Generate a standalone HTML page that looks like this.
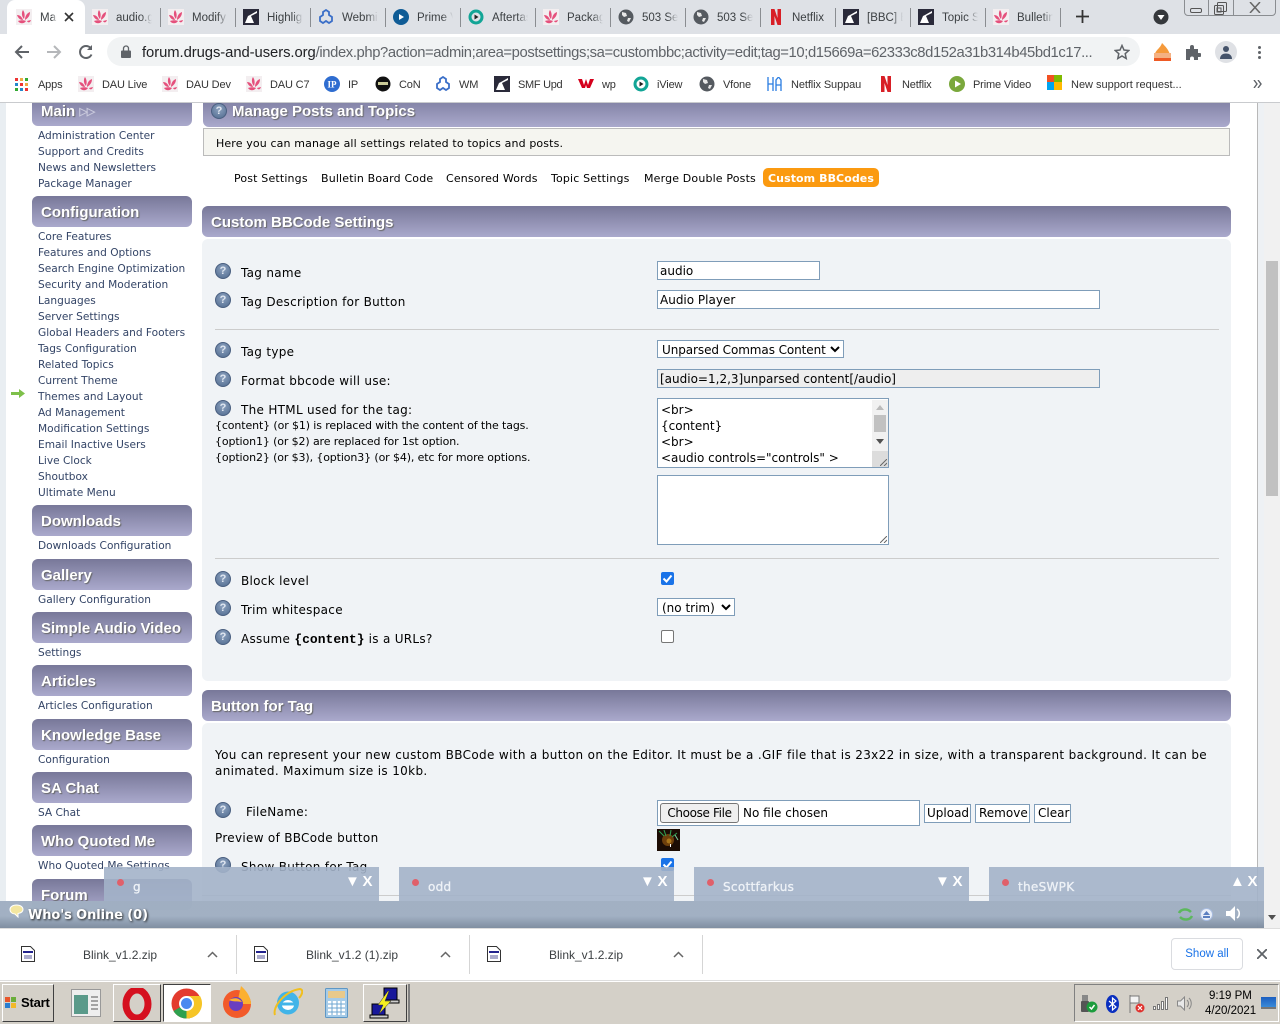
<!DOCTYPE html>
<html><head><meta charset="utf-8"><title>Manage Posts</title>
<style>
*{box-sizing:border-box}
html,body{margin:0;padding:0;width:1280px;height:1024px;overflow:hidden;background:#fff}
body{position:relative;font-family:"DejaVu Sans","Liberation Sans",sans-serif;color:#000}
.a{position:absolute}
.t{position:absolute;white-space:nowrap;line-height:16px}
.tab{position:absolute;white-space:nowrap;font:11.5px/16px "Liberation Sans",sans-serif;color:#3c4043;top:10px;overflow:hidden;-webkit-mask-image:linear-gradient(90deg,#000 70%,transparent);mask-image:linear-gradient(90deg,#000 70%,transparent)}
.sep{position:absolute;top:8px;width:1px;height:19px;background:#8a8d91}
.bm{position:absolute;top:77px;white-space:nowrap;font:11px/16px "Liberation Sans",sans-serif;color:#333;letter-spacing:-.15px}
.ic{position:absolute;display:block}
.sh{position:absolute;left:32px;width:160px;background:linear-gradient(#787899,#aaa9cc);color:#fff;font:bold 15px/34px "Liberation Sans",sans-serif;padding-left:9px;text-shadow:1px 1px 1px #666;border-radius:6px}
.si{position:absolute;left:38px;font-size:10.6px;line-height:16px;color:#334466;white-space:nowrap;margin-top:1px}
.mh{position:absolute;left:202px;width:1029px;border-radius:6px;background:linear-gradient(#787899,#aaa9cc);color:#fff;font:bold 15px/33px "Liberation Sans",sans-serif;padding-left:9px;text-shadow:1px 1px 1px #666}
.l{position:absolute;left:241px;font-size:12px;line-height:16px;white-space:nowrap;letter-spacing:.3px}
.h{position:absolute;left:215px;width:16px;height:16px;border-radius:50%;background:radial-gradient(circle at 50% 35%,#8ea3c0,#4f6a8e);border:1px solid #4a5f80;color:#dfe6f0;font:bold 11px/14px "Liberation Sans",sans-serif;text-align:center}
.f{position:absolute;background:#fff;border:1px solid #7f9db9;font-size:12px;line-height:19px;padding-left:2px;white-space:nowrap;overflow:hidden}
.hr{position:absolute;left:215px;width:1004px;height:1px;background:#ccc}
.cb{position:absolute;left:661px;width:13px;height:13px;border-radius:2px}
.off{background:#fff;border:1px solid #767676}
.chat{position:absolute;top:867px;width:275px;height:34px;background:rgba(163,179,201,.9)}
.chat b{position:absolute;left:29px;top:11px;margin-top:1px;font:normal 12px/16px "DejaVu Sans",sans-serif;color:#eef2f7;-webkit-text-stroke:.3px #eef2f7;letter-spacing:.3px}
.dot{position:absolute;left:13px;top:12px;width:7px;height:7px;border-radius:50%;background:#e0606a}
.ctl{position:absolute;left:241px;top:8px;color:#fff;font:bold 15px/14px "Liberation Sans",sans-serif;white-space:nowrap;word-spacing:-1.500px}
.dl{position:absolute;top:947px;font:12px/16px "Liberation Sans",sans-serif;color:#3c4043}
.dsep{position:absolute;top:935px;width:1px;height:39px;background:#d5d5d5}
.tb{position:absolute;top:984px;height:38px;border:1px solid;border-color:#fff #404040 #404040 #fff;background:#d4d0c8}
.s{position:absolute;font-size:11px;line-height:16px;white-space:nowrap;letter-spacing:.16px;top:171px}
.sm{position:absolute;left:215px;font-size:11px;line-height:16px;white-space:nowrap;letter-spacing:-.12px}
</style></head><body>
<svg width="0" height="0" style="position:absolute"><defs>
<symbol id="smf" viewBox="0 0 16 16"><rect width="16" height="16" fill="#f3eef0"/><path d="M7 1c2 3 2 6 1 9C6 8 5 4 7 1zM14 3c0 4-2 6-5 8 0-4 2-7 5-8zM1 6c3 0 5 2 6 5-3 0-5-2-6-5zM2 12c3-1 6-1 8 0-2 3-6 3-8 0zM11 12l4-1c-1 3-3 3-4 1z" fill="#e5507c"/></symbol>
<symbol id="hl" viewBox="0 0 16 16"><rect width="16" height="16" fill="#2a2a3a"/><path d="M2 14l3-7 2-1 7-4v2L8 7l3 7z" fill="#fff"/></symbol>
<symbol id="web" viewBox="0 0 16 16"><path d="M8 1l3 2v3l3 2v4l-3 2-3-2-3 2-3-2V8l3-2V3z" fill="none" stroke="#3b6fc8" stroke-width="1.800"/></symbol>
<symbol id="prime" viewBox="0 0 16 16"><circle cx="8" cy="8" r="8" fill="#0f5c96"/><path d="M6 5l5 3-5 3z" fill="#fff"/></symbol>
<symbol id="after" viewBox="0 0 16 16"><circle cx="8" cy="8" r="6" fill="none" stroke="#12a596" stroke-width="3"/><path d="M6.500 5.500l4 2.500-4 2.500z" fill="#222"/></symbol>
<symbol id="globe" viewBox="0 0 16 16"><circle cx="8" cy="8" r="7.500" fill="#555a60"/><path d="M4 3l4 1 1 3-3 1-2-2zM10 9l3 0-2 4-2-1z" fill="#e8e8e8"/></symbol>
<symbol id="nf" viewBox="0 0 16 16"><path d="M3 0h3.500l3 9V0H13v16H9.500l-3-9v9H3z" fill="#d81f26"/></symbol>
<symbol id="hq" viewBox="0 0 16 16"><circle cx="8" cy="8" r="8" fill="#2f6dd0"/><text x="8" y="11.500" text-anchor="middle" font-family="Liberation Serif" font-weight="bold" font-size="9" fill="#fff">IP</text></symbol>
</defs></svg>

<!-- tab strip -->
<div class="a" style="left:0;top:0;width:1280px;height:34px;background:#dee1e6"></div>
<div class="a" style="left:7px;top:0;width:78px;height:34px;background:#fff;border-radius:8px 8px 0 0"></div>
<svg class="ic" style="left:16px;top:9px" width="16" height="16"><use href="#smf"/></svg>
<div class="tab" style="left:40px;width:17px">Manage</div>
<svg class="ic" style="left:64px;top:12px" width="10" height="10" viewBox="0 0 10 10"><path d="M1 1l8 8M9 1L1 9" stroke="#333" stroke-width="1.600"/></svg>
<svg class="ic" style="left:92px;top:9px" width="16" height="16"><use href="#smf"/></svg><div class="tab" style="left:116px;width:36px">audio.gif</div><div class="sep" style="left:160px"></div>
<svg class="ic" style="left:168px;top:9px" width="16" height="16"><use href="#smf"/></svg><div class="tab" style="left:192px;width:36px">Modify</div><div class="sep" style="left:235px"></div>
<svg class="ic" style="left:243px;top:9px" width="16" height="16"><use href="#hl"/></svg><div class="tab" style="left:267px;width:36px">Highlight</div><div class="sep" style="left:310px"></div>
<svg class="ic" style="left:318px;top:9px" width="16" height="16"><use href="#web"/></svg><div class="tab" style="left:342px;width:36px">Webmin</div><div class="sep" style="left:385px"></div>
<svg class="ic" style="left:393px;top:9px" width="16" height="16"><use href="#prime"/></svg><div class="tab" style="left:417px;width:36px">Prime Video</div><div class="sep" style="left:460px"></div>
<svg class="ic" style="left:468px;top:9px" width="16" height="16"><use href="#after"/></svg><div class="tab" style="left:492px;width:36px">Aftertaste</div><div class="sep" style="left:535px"></div>
<svg class="ic" style="left:543px;top:9px" width="16" height="16"><use href="#smf"/></svg><div class="tab" style="left:567px;width:36px">Package</div><div class="sep" style="left:610px"></div>
<svg class="ic" style="left:618px;top:9px" width="16" height="16"><use href="#globe"/></svg><div class="tab" style="left:642px;width:36px">503 Service</div><div class="sep" style="left:685px"></div>
<svg class="ic" style="left:693px;top:9px" width="16" height="16"><use href="#globe"/></svg><div class="tab" style="left:717px;width:36px">503 Service</div><div class="sep" style="left:760px"></div>
<svg class="ic" style="left:768px;top:9px" width="16" height="16"><use href="#nf"/></svg><div class="tab" style="left:792px;width:34px;-webkit-mask-image:none;mask-image:none">Netflix</div><div class="sep" style="left:835px"></div>
<svg class="ic" style="left:843px;top:9px" width="16" height="16"><use href="#hl"/></svg><div class="tab" style="left:867px;width:36px">[BBC] Bulletin</div><div class="sep" style="left:910px"></div>
<svg class="ic" style="left:918px;top:9px" width="16" height="16"><use href="#hl"/></svg><div class="tab" style="left:942px;width:36px">Topic Settings</div><div class="sep" style="left:985px"></div>
<svg class="ic" style="left:993px;top:9px" width="16" height="16"><use href="#smf"/></svg><div class="tab" style="left:1017px;width:36px">Bulletin Board</div><div class="sep" style="left:1060px"></div>
<svg class="ic" style="left:1076px;top:10px" width="13" height="13" viewBox="0 0 13 13"><path d="M6.500 0v13M0 6.500h13" stroke="#333" stroke-width="1.800"/></svg>
<svg class="ic" style="left:1153px;top:9px" width="16" height="16" viewBox="0 0 16 16"><circle cx="8" cy="8" r="7.500" fill="#35383c"/><path d="M4.500 6h7L8 11z" fill="#fff"/></svg>
<!-- window controls -->
<div class="a" style="left:1184px;top:-4px;width:92px;height:20px;border:1px solid #8a8d91;border-radius:4px;background:#dee1e6"></div>
<div class="a" style="left:1208px;top:0;width:1px;height:16px;background:#8a8d91"></div>
<div class="a" style="left:1233px;top:0;width:1px;height:16px;background:#8a8d91"></div>
<div class="a" style="left:1190px;top:8px;width:12px;height:5px;border:1px solid #555;border-radius:2px"></div>
<svg class="ic" style="left:1214px;top:2px" width="13" height="13" viewBox="0 0 13 13" fill="none" stroke="#555"><rect x=".5" y="3.500" width="9" height="9" rx="1"/><rect x="3.500" y=".5" width="9" height="9" rx="1"/><rect x="3" y="6" width="4" height="4"/></svg>
<svg class="ic" style="left:1249px;top:2px" width="12" height="11" viewBox="0 0 12 11" fill="none" stroke="#666" stroke-width="1.500"><path d="M1 0l10 11M11 0L1 11"/></svg>

<!-- toolbar -->
<div class="a" style="left:0;top:34px;width:1280px;height:69px;background:#fff;border-bottom:1px solid #c9cbce"></div>
<svg class="ic" style="left:14px;top:44px" width="16" height="16" viewBox="0 0 16 16" fill="none" stroke="#5f6368" stroke-width="2"><path d="M15 8H2M8 2L2 8l6 6"/></svg>
<svg class="ic" style="left:46px;top:44px" width="16" height="16" viewBox="0 0 16 16" fill="none" stroke="#b5b7ba" stroke-width="2"><path d="M1 8h13M8 2l6 6-6 6"/></svg>
<svg class="ic" style="left:78px;top:44px" width="16" height="16" viewBox="0 0 16 16" fill="none" stroke="#5f6368" stroke-width="2"><path d="M13.500 10.500A6 6 0 1 1 12.500 4"/><path d="M14 1v5H9" fill="#5f6368" stroke="none"/></svg>
<div class="a" style="left:107px;top:37px;width:1033px;height:29px;background:#f1f3f4;border-radius:15px"></div>
<svg class="ic" style="left:121px;top:45px" width="10" height="13" viewBox="0 0 10 13"><path d="M2.500 6V3.500a2.500 2.500 0 0 1 5 0V6" fill="none" stroke="#5f6368" stroke-width="1.300"/><rect y="5.500" width="10" height="7.500" rx="1" fill="#5f6368"/></svg>
<div class="t" style="left:142px;top:45px;font:14.800px/16px 'Liberation Sans',sans-serif;color:#5f6368;letter-spacing:-.39px;width:965px;overflow:hidden"><span style="color:#202124;letter-spacing:-.06px">forum.drugs-and-users.org</span>/index.php?action=admin;area=postsettings;sa=custombbc;activity=edit;tag=10;d15669a=62333c8d152a31b314b45bd1c17...</div>
<svg class="ic" style="left:1114px;top:44px" width="16" height="16" viewBox="0 0 16 16"><path d="M8 1.500l2 4.500 4.800.5-3.600 3.200 1 4.800L8 12l-4.200 2.500 1-4.800L1.200 6.500 6 6z" fill="none" stroke="#5f6368" stroke-width="1.500"/></svg>
<svg class="ic" style="left:1154px;top:43px" width="17" height="18" viewBox="0 0 17 18"><path d="M1 12c0-5 5-6 7-12 3 3 7 7 8 12z" fill="#f59a3b"/><rect y="10" width="17" height="5" fill="#f4b183"/><rect y="15" width="17" height="3" fill="#ee5a24"/></svg>
<svg class="ic" style="left:1186px;top:45px" width="15" height="15" viewBox="0 0 15 15"><path d="M0 4h4V2a2 2 0 0 1 4 0v2h4v4h1.500a2 2 0 0 1 0 4H12v3H8v-1.500a2 2 0 0 0-4 0V15H0z" fill="#5f6368"/></svg>
<div class="a" style="left:1215px;top:41px;width:22px;height:22px;border-radius:50%;background:#dfe1e5"></div>
<svg class="ic" style="left:1219px;top:45px" width="14" height="14" viewBox="0 0 14 14"><circle cx="7" cy="4" r="3" fill="#45536a"/><path d="M1 14c0-4 3-5.500 6-5.500s6 1.500 6 5.500z" fill="#45536a"/></svg>
<div class="a" style="left:1258px;top:46px;width:3px;height:3px;border-radius:50%;background:#5f6368;box-shadow:0 5px 0 #5f6368,0 10px 0 #5f6368"></div>

<!-- bookmarks -->
<div class="a" style="left:15px;top:78px;width:3px;height:3px;background:#e33;box-shadow:5px 0 #ea4,10px 0 #3a3,0 5px #28c,5px 5px #e33,10px 5px #ea4,0 10px #3a3,5px 10px #28c,10px 10px #e33"></div>
<div class="bm" style="left:38px">Apps</div>
<svg class="ic" style="left:78px;top:76px" width="16" height="16"><use href="#smf"/></svg><div class="bm" style="left:102px">DAU Live</div>
<svg class="ic" style="left:162px;top:76px" width="16" height="16"><use href="#smf"/></svg><div class="bm" style="left:186px">DAU Dev</div>
<svg class="ic" style="left:246px;top:76px" width="16" height="16"><use href="#smf"/></svg><div class="bm" style="left:270px">DAU C7</div>
<svg class="ic" style="left:324px;top:76px" width="16" height="16"><use href="#hq"/></svg><div class="bm" style="left:348px">IP</div>
<svg class="ic" style="left:375px;top:76px" width="16" height="16" viewBox="0 0 16 16"><circle cx="8" cy="8" r="7.500" fill="#111"/><rect x="3" y="6" width="10" height="3" fill="#cc9"/></svg><div class="bm" style="left:399px">CoN</div>
<svg class="ic" style="left:435px;top:76px" width="16" height="16"><use href="#web"/></svg><div class="bm" style="left:459px">WM</div>
<svg class="ic" style="left:494px;top:76px" width="16" height="16"><use href="#hl"/></svg><div class="bm" style="left:518px;letter-spacing:-.3px">SMF Upd</div>
<svg class="ic" style="left:578px;top:79px" width="16" height="9" viewBox="0 0 16 12" preserveAspectRatio="none"><path d="M0 0h4l2 8 2-8h0l2 8 2-8h4l-4 12H9L8 8l-1 4H4z" fill="#d5001c"/></svg><div class="bm" style="left:602px">wp</div>
<svg class="ic" style="left:633px;top:76px" width="16" height="16"><use href="#after"/></svg><div class="bm" style="left:657px">iView</div>
<svg class="ic" style="left:699px;top:76px" width="16" height="16"><use href="#globe"/></svg><div class="bm" style="left:723px">Vfone</div>
<svg class="ic" style="left:767px;top:77px" width="15" height="14" viewBox="0 0 15 14" fill="none" stroke="#2a7de1" stroke-width="1.300"><path d="M1 0v14M6 0v14M1 7h5M9 14V3l2.500-3L14 3v11M9 8h5"/></svg><div class="bm" style="left:791px;letter-spacing:-.1px">Netflix Suppau</div>
<svg class="ic" style="left:878px;top:76px" width="16" height="16"><use href="#nf"/></svg><div class="bm" style="left:902px">Netflix</div>
<svg class="ic" style="left:949px;top:76px" width="16" height="16" viewBox="0 0 16 16"><circle cx="8" cy="8" r="8" fill="#7aa83c"/><path d="M6 4.500l6 3.500-6 3.500z" fill="#fff"/></svg><div class="bm" style="left:973px">Prime Video</div>
<div class="a" style="left:1047px;top:75px;width:7px;height:7px;background:#f25022"></div><div class="a" style="left:1054px;top:75px;width:8px;height:7px;background:#7fba00"></div><div class="a" style="left:1047px;top:82px;width:7px;height:8px;background:#00a4ef"></div><div class="a" style="left:1054px;top:82px;width:8px;height:8px;background:#ffb900"></div>
<div class="bm" style="left:1071px;letter-spacing:0">New support request...</div>
<svg class="ic" style="left:1253px;top:80px" width="9" height="8" viewBox="0 0 9 8" fill="none" stroke="#5f6368" stroke-width="1.400"><path d="M1 0l3 4-3 4M5 0l3 4-3 4"/></svg>

<!-- page frame -->
<div class="a" style="left:0;top:103px;width:6px;height:825px;background:#e9eef2"></div>
<div class="a" style="left:1257px;top:103px;width:1px;height:825px;background:#b8b8b8"></div>
<div class="a" style="left:1258px;top:103px;width:6px;height:825px;background:#eef1f4"></div>
<div class="a" style="left:1264px;top:103px;width:16px;height:825px;background:#f1f1f1"></div>
<div class="a" style="left:1266px;top:261px;width:12px;height:235px;background:#c1c1c1"></div>
<svg class="ic" style="left:1268px;top:915px" width="8" height="5" viewBox="0 0 8 5"><path d="M0 0h8L4 5z" fill="#505050"/></svg>

<!-- sidebar -->
<div class="sh" style="top:103px;height:23px;line-height:18px;background:linear-gradient(#8585a8,#aaa9cc);border-radius:0 0 6px 6px">Main <span style="color:#c9c9dc;font-size:11px;letter-spacing:-1px;text-shadow:none;vertical-align:1px">▷▷</span></div>
<div class="si" style="top:127px">Administration Center</div>
<div class="si" style="top:143px">Support and Credits</div>
<div class="si" style="top:159px">News and Newsletters</div>
<div class="si" style="top:175px">Package Manager</div>
<div class="sh" style="top:196px;height:31px">Configuration</div>
<div class="si" style="top:228px">Core Features</div>
<div class="si" style="top:244px">Features and Options</div>
<div class="si" style="top:260px">Search Engine Optimization</div>
<div class="si" style="top:276px">Security and Moderation</div>
<div class="si" style="top:292px">Languages</div>
<div class="si" style="top:308px">Server Settings</div>
<div class="si" style="top:324px">Global Headers and Footers</div>
<div class="si" style="top:340px">Tags Configuration</div>
<div class="si" style="top:356px">Related Topics</div>
<div class="si" style="top:372px">Current Theme</div>
<div class="si" style="top:388px">Themes and Layout</div>
<div class="si" style="top:404px">Ad Management</div>
<div class="si" style="top:420px">Modification Settings</div>
<div class="si" style="top:436px">Email Inactive Users</div>
<div class="si" style="top:452px">Live Clock</div>
<div class="si" style="top:468px">Shoutbox</div>
<div class="si" style="top:484px">Ultimate Menu</div>
<svg class="ic" style="left:11px;top:389px" width="14" height="9" viewBox="0 0 14 9"><path d="M0 3h8V0l6 4.500L8 9V6H0z" fill="#7ec04a"/></svg>
<div class="sh" style="top:505px;height:31px">Downloads</div><div class="si" style="top:537px">Downloads Configuration</div>
<div class="sh" style="top:559px;height:31px">Gallery</div><div class="si" style="top:591px">Gallery Configuration</div>
<div class="sh" style="top:612px;height:31px">Simple Audio Video</div><div class="si" style="top:644px">Settings</div>
<div class="sh" style="top:665px;height:31px">Articles</div><div class="si" style="top:697px">Articles Configuration</div>
<div class="sh" style="top:719px;height:31px">Knowledge Base</div><div class="si" style="top:751px">Configuration</div>
<div class="sh" style="top:772px;height:31px">SA Chat</div><div class="si" style="top:804px">SA Chat</div>
<div class="sh" style="top:825px;height:31px">Who Quoted Me</div><div class="si" style="top:857px">Who Quoted Me Settings</div>
<div class="sh" style="top:879px;height:31px">Forum</div>

<!-- main header -->
<div class="mh" style="left:203px;width:1027px;top:103px;height:24px;line-height:18px;padding-left:29px;background:linear-gradient(#8585a8,#aaa9cc);border-radius:0 0 6px 6px">Manage Posts and Topics</div>
<div class="h" style="left:211px;top:103px">?</div>
<div class="a" style="left:203px;top:128px;width:1027px;height:28px;background:#f5f5f0;border:1px solid #bbb"></div>
<div class="t" style="left:216px;top:135px;margin-top:1px;font-size:11px;letter-spacing:.13px">Here you can manage all settings related to topics and posts.</div>
<div class="s" style="left:234px">Post Settings</div>
<div class="s" style="left:321px">Bulletin Board Code</div>
<div class="s" style="left:446px">Censored Words</div>
<div class="s" style="left:551px">Topic Settings</div>
<div class="s" style="left:644px">Merge Double Posts</div>
<div class="a" style="left:763px;top:168px;width:116px;height:19px;background:#fb9a10;border-radius:5px"></div>
<div class="s" style="left:768px;font-weight:bold;color:#fff;letter-spacing:.08px">Custom BBCodes</div>

<div class="mh" style="top:206px;height:31px">Custom BBCode Settings</div>
<div class="a" style="left:202px;top:239px;width:1029px;height:442px;background:#f0f3f6;border-radius:6px"></div>

<div class="h" style="top:263px">?</div><div class="l" style="top:265px">Tag name</div>
<div class="f" style="left:657px;top:261px;width:163px;height:19px">audio</div>
<div class="h" style="top:292px">?</div><div class="l" style="top:294px">Tag Description for Button</div>
<div class="f" style="left:657px;top:290px;width:443px;height:19px">Audio Player</div>
<div class="hr" style="top:329px"></div>
<div class="h" style="top:342px">?</div><div class="l" style="top:344px">Tag type</div>
<div class="f" style="left:657px;top:340px;width:187px;height:18px;padding-left:4px;line-height:18px;letter-spacing:-.08px">Unparsed Commas Content<svg class="ic" style="left:172px;top:5px" width="10" height="7" viewBox="0 0 10 7"><path d="M1 1l4 4 4-4" fill="none" stroke="#000" stroke-width="2"/></svg></div>
<div class="h" style="top:371px">?</div><div class="l" style="top:373px">Format bbcode will use:</div>
<div class="f" style="left:657px;top:369px;width:443px;height:19px;background:#eee">[audio=1,2,3]unparsed content[/audio]</div>
<div class="h" style="top:400px">?</div><div class="l" style="top:402px">The HTML used for the tag:</div>
<div class="sm" style="top:418px">{content} (or $1) is replaced with the content of the tags.</div>
<div class="sm" style="top:434px">{option1} (or $2) are replaced for 1st option.</div>
<div class="sm" style="top:450px">{option2} (or $3), {option3} (or $4), etc for more options.</div>
<div class="f" style="left:657px;top:398px;width:232px;height:70px;padding:3px 0 0 3px;line-height:16px">&lt;br&gt;<br>{content}<br>&lt;br&gt;<br>&lt;audio controls="controls" &gt;</div>
<div class="a" style="left:872px;top:400px;width:16px;height:67px;background:#f1f1f1"></div>
<div class="a" style="left:874px;top:415px;width:12px;height:17px;background:#c1c1c1"></div>
<svg class="ic" style="left:876px;top:405px" width="8" height="5" viewBox="0 0 8 5"><path d="M0 5h8L4 0z" fill="#bbb"/></svg>
<svg class="ic" style="left:876px;top:439px" width="8" height="5" viewBox="0 0 8 5"><path d="M0 0h8L4 5z" fill="#505050"/></svg>
<div class="a" style="left:872px;top:451px;width:16px;height:16px;background:#dcdcdc"></div>
<svg class="ic" style="left:880px;top:459px" width="7" height="7" viewBox="0 0 7 7"><path d="M0 7l7-7M4 7l3-3" stroke="#666"/></svg>
<div class="f" style="left:657px;top:475px;width:232px;height:70px"></div>
<svg class="ic" style="left:880px;top:536px" width="7" height="7" viewBox="0 0 7 7"><path d="M0 7l7-7M4 7l3-3" stroke="#666"/></svg>
<div class="hr" style="top:558px"></div>
<div class="h" style="top:571px">?</div><div class="l" style="top:573px">Block level</div>
<svg class="ic" style="left:661px;top:572px" width="13" height="13" viewBox="0 0 13 13"><rect width="13" height="13" rx="2" fill="#1a73e8"/><path d="M2.500 6.500l3 3 5-6" fill="none" stroke="#fff" stroke-width="2"/></svg>
<div class="h" style="top:600px">?</div><div class="l" style="top:602px">Trim whitespace</div>
<div class="f" style="left:657px;top:598px;width:78px;height:18px;padding-left:4px;line-height:18px">(no trim)<svg class="ic" style="left:63px;top:5px" width="10" height="7" viewBox="0 0 10 7"><path d="M1 1l4 4 4-4" fill="none" stroke="#000" stroke-width="2"/></svg></div>
<div class="h" style="top:629px">?</div><div class="l" style="top:631px">Assume <b style="font-family:'Liberation Mono',monospace;font-size:13px;letter-spacing:0">{content}</b> is a URLs?</div>
<div class="cb off" style="top:630px"></div>

<div class="mh" style="top:690px;height:31px">Button for Tag</div>
<div class="a" style="left:202px;top:723px;width:1029px;height:178px;background:#f0f3f6;border-radius:6px 6px 0 0"></div>
<div class="t" style="left:215px;top:747px;font-size:12px;letter-spacing:.35px">You can represent your new custom BBCode with a button on the Editor. It must be a .GIF file that is 23x22 in size, with a transparent background. It can be</div>
<div class="t" style="left:215px;top:763px;font-size:12px;letter-spacing:.35px">animated. Maximum size is 10kb.</div>
<div class="h" style="top:802px">?</div><div class="l" style="top:804px;left:246px">FileName:</div>
<div class="f" style="left:657px;top:800px;width:263px;height:26px"></div>
<div class="a" style="left:660px;top:803px;width:79px;height:20px;background:#efefef;border:1px solid #767676;border-radius:3px;font-size:12px;line-height:18px;text-align:center;letter-spacing:-.35px">Choose File</div>
<div class="t" style="left:743px;top:805px;font-size:12px">No file chosen</div>
<div class="f" style="left:924px;top:804px;width:47px;height:19px;line-height:17px">Upload</div>
<div class="f" style="left:975px;top:804px;width:55px;height:19px;line-height:17px;padding-left:3px">Remove</div>
<div class="f" style="left:1034px;top:804px;width:37px;height:19px;line-height:17px;padding-left:3px">Clear</div>
<div class="t" style="left:215px;top:830px;font-size:12px;letter-spacing:.3px">Preview of BBCode button</div>
<svg class="ic" style="left:657px;top:829px" width="23" height="22" viewBox="0 0 23 22"><rect width="23" height="22" fill="#1c0c04"/><circle cx="11" cy="11" r="6" fill="#6e3f0c"/><circle cx="12" cy="12" r="2.500" fill="#a8741a"/><path d="M2 2l5 5M7 1l2 6M14 1l-1 6M20 4l-5 4" stroke="#2f9c50" stroke-width="1.100"/><path d="M18 6l3 5" stroke="#7acc9a"/><rect x="13" y="15" width="1" height="3" fill="#fff"/></svg>
<div class="h" style="top:857px">?</div><div class="l" style="top:859px">Show Button for Tag</div>
<svg class="ic" style="left:661px;top:858px" width="13" height="13" viewBox="0 0 13 13"><rect width="13" height="13" rx="2" fill="#1a73e8"/><path d="M2.500 6.500l3 3 5-6" fill="none" stroke="#fff" stroke-width="2"/></svg>
<div class="a" style="left:202px;top:895px;width:1029px;height:1px;background:#ccc"></div>

<!-- chat bar -->
<div class="chat" style="left:104px"><i class="dot"></i><b>g</b><span class="ctl">▼ X</span></div>
<div class="chat" style="left:399px"><i class="dot"></i><b>odd</b><span class="ctl">▼ X</span></div>
<div class="chat" style="left:694px"><i class="dot"></i><b>Scottfarkus</b><span class="ctl">▼ X</span></div>
<div class="chat" style="left:989px"><i class="dot"></i><b>theSWPK</b><span class="ctl">▲ X</span></div>
<div class="a" style="left:0;top:901px;width:1264px;height:27px;background:linear-gradient(#a0afc2 0,#a0afc2 55%,#7d8c9f 100%);opacity:.98"></div>
<svg class="ic" style="left:9px;top:904px" width="15" height="14" viewBox="0 0 15 14"><path d="M7.500 1C3.500 1 1 3 1 5.500S3 10 6 10l3 3V9.500c3-.5 5-2 5-4C14 3 11.500 1 7.500 1z" fill="#f3e6a0" stroke="#fff"/></svg>
<div class="t" style="left:28px;top:906px;margin-top:2px;font-size:13px;font-weight:bold;color:#fff;text-shadow:1px 1px 2px #222;letter-spacing:-.1px">Who's Online (0)</div>
<svg class="ic" style="left:1177px;top:906px" width="17" height="17" viewBox="0 0 17 17" fill="none" stroke="#5cb85c" stroke-width="2.500"><path d="M2 7c2-4 8-5 12-1M15 10c-2 4-8 5-12 1"/></svg>
<div class="a" style="left:1200px;top:908px;width:13px;height:13px;border-radius:50%;background:#e8eef8;border:1px solid #a8bce0"></div>
<svg class="ic" style="left:1202px;top:911px" width="9" height="7" viewBox="0 0 9 7"><path d="M1 4l3.500-4L8 4zM1 5h7v2H1z" fill="#5b7fc0"/></svg>
<svg class="ic" style="left:1226px;top:906px" width="17" height="15" viewBox="0 0 17 15"><path d="M0 5h4l5-5v15L4 10H0z" fill="#fff"/><path d="M11 3c3 2 3 7 0 9" fill="none" stroke="#fff" stroke-width="1.600"/></svg>

<!-- downloads bar -->
<div class="a" style="left:0;top:928px;width:1280px;height:53px;background:#fff;border-top:1px solid #ddd;border-bottom:1px solid #ddd"></div>
<svg class="ic" style="left:21px;top:946px" width="14" height="16" viewBox="0 0 14 16"><path d="M.5.5h9l4 4v11H.5z" fill="#fff" stroke="#333"/><rect x="2" y="5" width="10" height="2" fill="#23238e"/><rect x="3" y="9" width="8" height="4" fill="#aac"/></svg>
<div class="dl" style="left:83px">Blink_v1.2.zip</div>
<svg class="ic" style="left:207px;top:951px" width="11" height="7" viewBox="0 0 11 7"><path d="M1 6l4.500-4.500L10 6" fill="none" stroke="#666" stroke-width="1.500"/></svg>
<div class="dsep" style="left:236px"></div>
<svg class="ic" style="left:254px;top:946px" width="14" height="16" viewBox="0 0 14 16"><path d="M.5.5h9l4 4v11H.5z" fill="#fff" stroke="#333"/><rect x="2" y="5" width="10" height="2" fill="#23238e"/><rect x="3" y="9" width="8" height="4" fill="#aac"/></svg>
<div class="dl" style="left:306px">Blink_v1.2 (1).zip</div>
<svg class="ic" style="left:440px;top:951px" width="11" height="7" viewBox="0 0 11 7"><path d="M1 6l4.500-4.500L10 6" fill="none" stroke="#666" stroke-width="1.500"/></svg>
<div class="dsep" style="left:469px"></div>
<svg class="ic" style="left:487px;top:946px" width="14" height="16" viewBox="0 0 14 16"><path d="M.5.5h9l4 4v11H.5z" fill="#fff" stroke="#333"/><rect x="2" y="5" width="10" height="2" fill="#23238e"/><rect x="3" y="9" width="8" height="4" fill="#aac"/></svg>
<div class="dl" style="left:549px">Blink_v1.2.zip</div>
<svg class="ic" style="left:673px;top:951px" width="11" height="7" viewBox="0 0 11 7"><path d="M1 6l4.500-4.500L10 6" fill="none" stroke="#666" stroke-width="1.500"/></svg>
<div class="dsep" style="left:702px"></div>
<div class="a" style="left:1171px;top:938px;width:72px;height:32px;border:1px solid #dadce0;border-radius:4px;font:11.500px/30px 'Liberation Sans',sans-serif;color:#1a73e8;text-align:center">Show all</div>
<svg class="ic" style="left:1257px;top:949px" width="10" height="10" viewBox="0 0 10 10"><path d="M0 0l10 10M10 0L0 10" stroke="#5f6368" stroke-width="1.800"/></svg>

<!-- taskbar -->
<div class="a" style="left:0;top:981px;width:1280px;height:43px;background:#d4d0c8;border-top:1px solid #fff"></div>
<div class="tb" style="left:2px;width:52px"></div>
<div class="t" style="left:21px;top:995px;font:bold 13px/16px 'Liberation Sans',sans-serif;letter-spacing:-.2px">Start</div>
<div class="a" style="left:5px;top:997px;width:5px;height:5px;background:#e8562a;box-shadow:6px 0 #6aae3a,0 6px #2a7ed0,6px 6px #f2b92a"></div>
<svg class="ic" style="left:71px;top:989px" width="30" height="28" viewBox="0 0 30 28"><rect x=".5" y=".5" width="29" height="27" fill="#eee" stroke="#999"/><rect x="3" y="6" width="14" height="19" fill="#5a9a8a"/><path d="M20 8h7M20 12h7M20 16h7M20 20h7" stroke="#555"/></svg>
<div class="tb" style="left:113px;width:48px;background:#d4d0c8"></div>
<svg class="ic" style="left:121px;top:988px" width="32" height="32" viewBox="0 0 32 32"><ellipse cx="16" cy="16" rx="11" ry="14" fill="none" stroke="#d5101f" stroke-width="7"/></svg>
<div class="a" style="left:163px;top:984px;width:48px;height:38px;background:#fff;border:1px solid;border-color:#404040 #fff #fff #404040"></div>
<svg class="ic" style="left:171px;top:988px" width="31" height="31" viewBox="0 0 31 31"><circle cx="15.500" cy="15.500" r="15" fill="#e33b2e"/><path d="M15.500 15.500L2.500 23a15 15 0 0 0 13 7.500c4 0 8-1.500 10.500-5z" fill="#2fa14f"/><path d="M15.500 8h13.500a15 15 0 0 1-13.500 22.500z" fill="#f6c527"/><circle cx="15.500" cy="15.500" r="7.500" fill="#fff"/><circle cx="15.500" cy="15.500" r="5.500" fill="#4a8af0"/></svg>
<svg class="ic" style="left:221px;top:986px" width="32" height="33" viewBox="0 0 32 33"><circle cx="16" cy="18" r="14" fill="#f25a2a"/><path d="M20 0c6 5 10 12 10 18H16z" fill="#fbb030"/><circle cx="15" cy="18" r="7" fill="#6a3ec0"/><path d="M8 14c6-3 10-2 13 2-5-1-9 0-13-2z" fill="#ffb030"/></svg>
<svg class="ic" style="left:273px;top:987px" width="30" height="31" viewBox="0 0 30 31"><ellipse cx="15" cy="16" rx="11" ry="11.500" fill="#41b4e8"/><ellipse cx="15" cy="18" rx="6" ry="5" fill="#fff"/><rect x="9" y="15.500" width="13" height="3" fill="#41b4e8"/><path d="M2 28C-1 20 12 4 27 2c4 1 2 6-1 9" fill="none" stroke="#f1bf1e" stroke-width="2"/></svg>
<svg class="ic" style="left:325px;top:988px" width="23" height="30" viewBox="0 0 23 30"><rect x=".5" y=".5" width="22" height="29" rx="1" fill="#a5cbe8" stroke="#5e97c5"/><rect x="3" y="3" width="17" height="7" fill="#e8c98a"/><path d="M3 13h17v14H3z" fill="#fff"/><path d="M3 16h17M3 20h17M3 24h17M7 13v14M12 13v14M16 13v14" stroke="#6ea5d0"/></svg>
<div class="tb" style="left:363px;width:44px;background:#d4d0c8"></div><div class="a" style="left:408px;top:984px;width:2px;height:38px;background:#808080"></div>
<svg class="ic" style="left:369px;top:987px" width="32" height="32" viewBox="0 0 32 32"><rect x="15" y="1" width="13" height="12" fill="#18189a" stroke="#000"/><rect x="3" y="17" width="13" height="11" fill="#18189a" stroke="#000"/><rect x="1" y="28" width="18" height="3" fill="#ccc" stroke="#000"/><rect x="13" y="13" width="17" height="3" fill="#ccc" stroke="#000"/><path d="M19 4L9 18h5l-4 9 12-13h-6l4-10z" fill="#f6ee20" stroke="#333" stroke-width=".5"/></svg>

<!-- tray -->
<div class="a" style="left:1074px;top:984px;width:205px;height:38px;border:1px solid;border-color:#808080 #fff #fff #808080"></div>
<svg class="ic" style="left:1080px;top:995px" width="18" height="18" viewBox="0 0 18 18"><rect x="2" y="0" width="6" height="6" fill="#888"/><rect x="1" y="6" width="8" height="11" rx="1" fill="#555"/><circle cx="12" cy="12" r="5.500" fill="#1c9c3c"/><path d="M9.500 12l2 2 3-4" stroke="#fff" fill="none" stroke-width="1.500"/></svg>
<svg class="ic" style="left:1106px;top:995px" width="13" height="18" viewBox="0 0 13 18"><ellipse cx="6.500" cy="9" rx="6.500" ry="9" fill="#0a2fbf"/><path d="M3 6l7 6-3.500 3V3L10 6l-7 6" fill="none" stroke="#fff" stroke-width="1.200"/></svg>
<svg class="ic" style="left:1129px;top:995px" width="16" height="18" viewBox="0 0 16 18"><path d="M1 0v18M1 1h9v7H1" fill="#f4f4f4" stroke="#777"/><circle cx="11" cy="13" r="4.500" fill="#e0322e"/><path d="M9 11l4 4M13 11l-4 4" stroke="#fff" stroke-width="1.200"/></svg>
<svg class="ic" style="left:1153px;top:997px" width="16" height="13" viewBox="0 0 16 13" fill="#fff" stroke="#777"><rect x=".5" y="9.500" width="2" height="3"/><rect x="4.500" y="7.500" width="2" height="5"/><rect x="8.500" y="4.500" width="2" height="8"/><rect x="12.500" y=".5" width="2" height="12"/></svg>
<svg class="ic" style="left:1177px;top:996px" width="16" height="15" viewBox="0 0 16 15" fill="#e8e8e8" stroke="#888"><path d="M.5 5h3l4-4v13l-4-4h-3z"/><path d="M10 4c2 2 2 5 0 7M12 2c3 3 3 8 0 11" fill="none"/></svg>
<div class="t" style="left:1209px;top:988px;font:11.500px/16px 'Liberation Sans',sans-serif">9:19 PM</div>
<div class="t" style="left:1205px;top:1003px;font:11.500px/16px 'Liberation Sans',sans-serif">4/20/2021</div>
<div class="a" style="left:1261px;top:997px;width:15px;height:12px;background:linear-gradient(#1d5fc0,#3a8ad8);border-bottom:2px solid #777"></div>
</body></html>
